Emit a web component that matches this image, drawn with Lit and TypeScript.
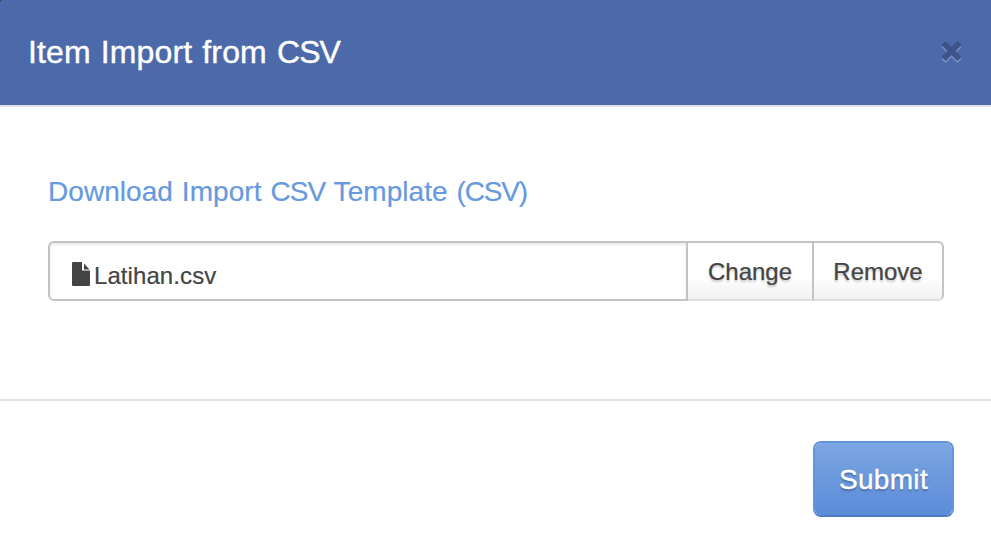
import { LitElement, html, css, svg } from "lit";
import { customElement, state } from "lit/decorators.js";

@customElement("app-root")
export class AppRoot extends LitElement {
  @state() private fileName = "Latihan.csv";

  static styles = css`
    :host {
      display: flex;
      flex-direction: column;
      box-sizing: border-box;
      height: 536px;
      overflow: hidden;
      background: #fff;
      color: #444;
      font-family: "Liberation Sans", Arial, sans-serif;
    }
    * { box-sizing: border-box; }
    header {
      display: flex;
      align-items: center;
      justify-content: space-between;
      height: 107px;
      padding: 0 27px 2px 28px;
      background: radial-gradient(circle at 0 0, #3c4150 1px, #4c6aaa 2px);
      border-bottom: 2px solid #e0e1e7;
    }
    h1 {
      margin: 0;
      color: #fff;
      font-size: 32px;
      line-height: 40px;
      font-weight: 400;
      letter-spacing: 0.12px;
      word-spacing: 1.1px;
      -webkit-text-stroke: 0.4px #fff;
    }
    .tight { letter-spacing: -0.9px; }
    .tighter { letter-spacing: -1.2px; }
    .close { display: block; width: 24px; height: 26px; }
    button {
      font-family: inherit;
      margin: 0;
      cursor: pointer;
    }
    .close-btn { padding: 0; border: 0; background: none; }
    main {
      height: 292px;
      padding: 67px 47px 0 48px;
    }
    .link {
      display: block;
      color: #6699e0;
      font-size: 28px;
      line-height: 36px;
      height: 67px;
      text-decoration: none;
      white-space: nowrap;
      word-spacing: 1px;
      letter-spacing: 0.06px;
      -webkit-text-stroke: 0.2px #6699e0;
    }
    .group { display: flex; height: 60px; }
    .file {
      display: flex;
      align-items: center;
      gap: 4px;
      width: 640px;
      padding: 10px 0 0 22px;
      border: 2px solid #c4c4c4;
      border-radius: 6px 0 0 6px;
      box-shadow: inset 0 2px 3px rgba(0, 0, 0, 0.09);
      font-size: 24px;
      line-height: 30px;
      letter-spacing: 0.08px;
      -webkit-text-stroke: 0.2px #444;
    }
    .icon { display: block; width: 18px; height: 24px; margin-bottom: 4px; }
    .btn {
      padding: 1px 0 0;
      border: 2px solid #c4c4c4;
      border-bottom-color: #dedede;
      border-left-width: 0;
      background: linear-gradient(#fff 0%, #fff 60%, #f1f1f1 100%);
      color: #444;
      font-size: 24px;
      line-height: 30px;
      text-shadow: 0 2px 2px rgba(0, 0, 0, 0.22);
      -webkit-text-stroke: 0.2px #444;
    }
    .change { width: 126px; }
    .remove { width: 130px; border-radius: 0 6px 6px 0; }
    footer {
      display: flex;
      justify-content: flex-end;
      height: 137px;
      padding: 40px 37px 0 0;
      border-top: 2px solid #e0e0e0;
    }
    .submit {
      width: 141px;
      height: 76px;
      padding: 2px 0 0;
      border: 2px solid #6495dc;
      border-bottom-color: #4e7cc5;
      border-radius: 8px;
      background: linear-gradient(#7ba6e1, #5c8bd9) padding-box;
      color: #fff;
      font-size: 28px;
      line-height: 36px;
      letter-spacing: 0.3px;
      text-shadow: 0 2px 2px rgba(0, 0, 0, 0.3);
      -webkit-text-stroke: 0.4px #fff;
    }
  `;

  private cross = svg`
    <path d="M3.5 6 19.5 22M19.5 6 3.5 22" stroke="#7891c3" stroke-width="6" fill="none"/>
    <path d="M3.5 4 19.5 20M19.5 4 3.5 20" stroke="#3d5488" stroke-width="6" fill="none"/>`;

  render() {
    return html`
      <header>
        <h1>Item Import from <span class="tight">CSV</span></h1>
        <button class="close-btn" aria-label="Close">
          <svg class="close" viewBox="0 0 24 26">${this.cross}</svg>
        </button>
      </header>
      <main>
        <a class="link">Download Import <span class="tight">CSV</span> Template <span class="tighter">(CSV)</span></a>
        <div class="group">
          <div class="file">
            <svg class="icon" viewBox="0 0 18 24" fill="#444">
              <path d="M1 0H10V8.5H18V23Q18 24 17 24H1Q0 24 0 23V1Q0 0 1 0Z" />
              <path d="M12 1.5 17.5 7.5H12Z" />
            </svg>
            <span>${this.fileName}</span>
          </div>
          <button class="btn change">Change</button>
          <button class="btn remove">Remove</button>
        </div>
      </main>
      <footer><button class="submit">Submit</button></footer>
    `;
  }
}
